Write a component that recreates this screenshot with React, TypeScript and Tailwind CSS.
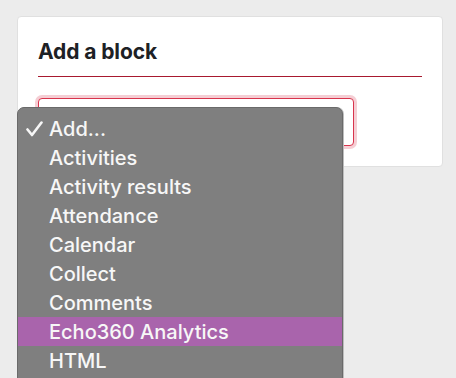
import React from "react";

const OPTIONS = [
  "Add...",
  "Activities",
  "Activity results",
  "Attendance",
  "Calendar",
  "Collect",
  "Comments",
  "Echo360 Analytics",
  "HTML",
];

const SELECTED = 0;
const HOVERED = 7;

function Check() {
  return (
    <svg width="17" height="16" viewBox="0 0 17 16" className="shrink-0">
      <path d="M1.5 8.5 L6 14 L15.5 1.5" fill="none" stroke="#f7f7f7" strokeWidth="2.6" strokeLinecap="round" strokeLinejoin="round" />
    </svg>
  );
}

export default function App() {
  return (
    <div className="relative w-[456px] h-[378px] overflow-hidden bg-[#ececec] pt-[16px] px-[17px] font-['Inter',sans-serif]">
      {/* card */}
      <div className="w-[426px] bg-white rounded-[4px] border border-[#e0e0e0] px-[20px] pt-[22px] pb-[20px]">
        <h2 className="text-[21px] leading-[25px] font-bold text-[#1d2125] pb-[12px] border-b border-[#a8192f] tracking-[-0.1px]">
          Add a block
        </h2>
        <div className="mt-[21px] w-[316px] h-[48px] rounded-[4px] border border-[#d8344d] shadow-[0_0_0_3px_rgba(220,80,100,0.28)] bg-white" />
      </div>

      {/* native select popup */}
      <div className="absolute left-[17px] top-[107px] w-[326px] h-[290px] bg-[#7f7f7f] rounded-t-[7px] border border-[#6a6a6a] shadow-[1px_0_0_#bdbdbd] pt-[6px]">
        {OPTIONS.map((o, i) => (
          <div
            key={o}
            className={
              "h-[29px] flex items-center text-[20px] font-medium text-[#f7f7f7] " +
              (i === HOVERED ? "bg-[#a964ac]" : "")
            }
          >
            <span className="w-[31px] flex justify-end pr-[6px]">{i === SELECTED && <Check />}</span>
            <span>{o}</span>
          </div>
        ))}
      </div>
    </div>
  );
}
